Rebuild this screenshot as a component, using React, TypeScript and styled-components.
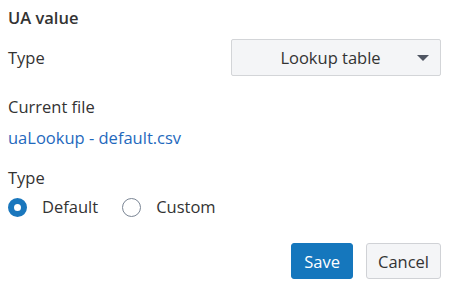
import React, { useState } from "react";
import styled, { createGlobalStyle } from "styled-components";

const GlobalStyle = createGlobalStyle`
  body {
    margin: 0;
    background: #fff;
    font-family: "Open Sans", "Noto Sans", sans-serif;
    color: #333;
  }
`;

const Panel = styled.div`
  width: 457px;
  height: 287px;
  box-sizing: border-box;
  padding: 6px 16px 0 8px;
  display: flex;
  flex-direction: column;
`;

const Title = styled.h3`
  margin: 0;
  font-size: 16.5px;
  font-weight: 600;
  line-height: 24px;
  color: #333;
`;

const Row = styled.div<{ top?: number }>`
  display: flex;
  align-items: center;
  justify-content: space-between;
  margin-top: ${(props) => props.top ?? 0}px;
`;

const Label = styled.div<{ top?: number }>`
  font-size: 16.5px;
  line-height: 22px;
  color: #333;
  margin-top: ${(props) => props.top ?? 0}px;
`;

const Select = styled.button`
  width: 210px;
  height: 37px;
  box-sizing: border-box;
  border: 1px solid #d3d5d8;
  border-radius: 2px;
  background: #f4f5f7;
  display: flex;
  align-items: center;
  padding: 0 11px 0 12px;
  font-family: inherit;
  font-size: 16.5px;
  color: #333;
  cursor: pointer;
`;

const SelectText = styled.span`
  flex: 1;
  text-align: center;
`;

const Caret = styled.span`
  width: 0;
  height: 0;
  border-left: 6px solid transparent;
  border-right: 6px solid transparent;
  border-top: 6px solid #4f5562;
`;

const FileLink = styled.a`
  font-size: 16.5px;
  line-height: 22px;
  color: #1f69bd;
  text-decoration: none;
  margin-top: 9px;
`;

const RadioGroup = styled.div`
  display: flex;
  align-items: center;
  gap: 24px;
  margin-top: 7px;
`;

const RadioLabel = styled.label`
  display: flex;
  align-items: center;
  gap: 15px;
  font-size: 16.5px;
  line-height: 22px;
  color: #333;
  cursor: pointer;
`;

const RadioDot = styled.span<{ checked: boolean }>`
  width: 19px;
  height: 19px;
  box-sizing: border-box;
  border-radius: 50%;
  border: ${(props) => (props.checked ? "6px solid #1a77bd" : "1px solid #7a8594")};
  background: #fff;
`;

const Actions = styled.div`
  display: flex;
  justify-content: flex-end;
  gap: 13px;
  margin-top: 25px;
`;

const Button = styled.button<{ primary?: boolean }>`
  height: 36px;
  box-sizing: border-box;
  padding: 0 ${(props) => (props.primary ? 12 : 11)}px;
  border-radius: 3px;
  font-family: inherit;
  font-size: 16.5px;
  cursor: pointer;
  border: 1px solid ${(props) => (props.primary ? "#1577bd" : "#d0d2d6")};
  background: ${(props) => (props.primary ? "#1577bd" : "#f4f5f7")};
  color: ${(props) => (props.primary ? "#fff" : "#333")};
`;

const App = () => {
  const [type, setType] = useState("default");

  return (
    <>
      <GlobalStyle />
      <Panel>
        <Title>UA value</Title>
        <Row top={9}>
          <Label>Type</Label>
          <Select>
            <SelectText>Lookup table</SelectText>
            <Caret />
          </Select>
        </Row>
        <Label top={20}>Current file</Label>
        <FileLink href="#">uaLookup - default.csv</FileLink>
        <Label top={18}>Type</Label>
        <RadioGroup>
          <RadioLabel onClick={() => setType("default")}>
            <RadioDot checked={type === "default"} />
            Default
          </RadioLabel>
          <RadioLabel onClick={() => setType("custom")}>
            <RadioDot checked={type === "custom"} />
            Custom
          </RadioLabel>
        </RadioGroup>
        <Actions>
          <Button primary>Save</Button>
          <Button>Cancel</Button>
        </Actions>
      </Panel>
    </>
  );
};

export default App;
